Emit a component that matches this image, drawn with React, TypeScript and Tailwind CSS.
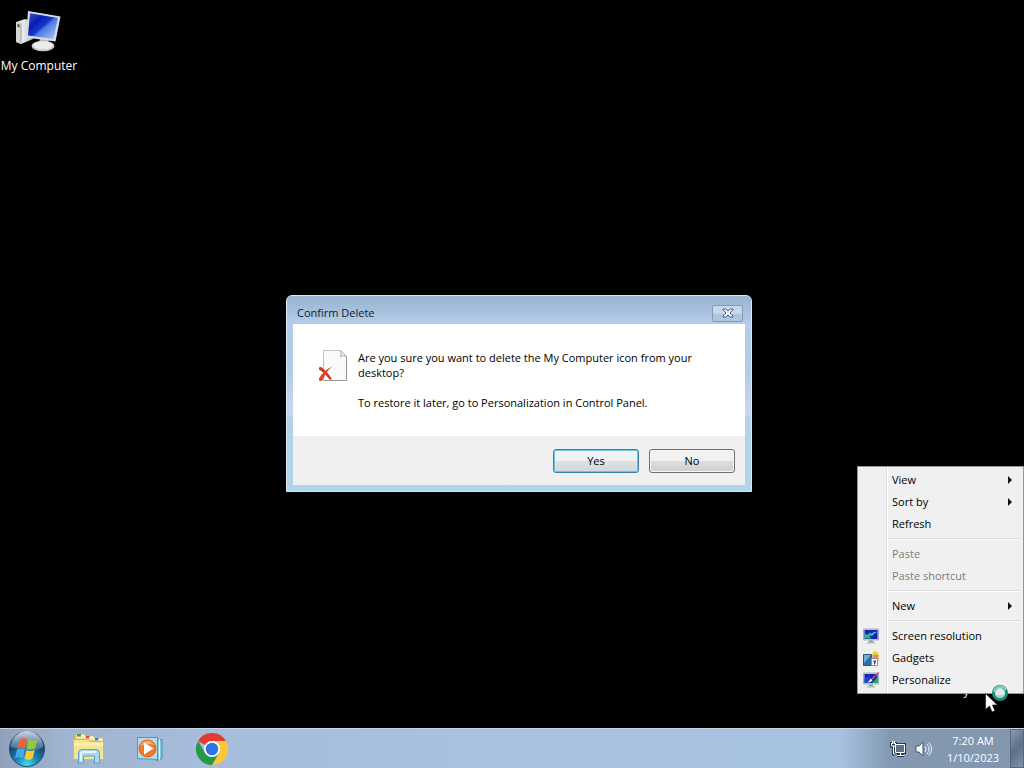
import React from "react";

function ComputerIcon() {
  return (
    <svg width="48" height="44" viewBox="0 0 48 44" aria-hidden="true">
      <defs>
        <linearGradient id="scr" x1="0" y1="0" x2="1" y2="1">
          <stop offset="0" stopColor="#3a55c8" />
          <stop offset=".3" stopColor="#0a1cae" />
          <stop offset=".5" stopColor="#1838cc" />
          <stop offset=".56" stopColor="#4a78e4" />
          <stop offset="1" stopColor="#b4d4fa" />
        </linearGradient>
        <linearGradient id="tower" x1="0" y1="0" x2="1" y2="0">
          <stop offset="0" stopColor="#c4c4c4" />
          <stop offset=".4" stopColor="#ececec" />
          <stop offset="1" stopColor="#b9b9b9" />
        </linearGradient>
      </defs>
      <path d="M1 14l9-3 8 2v18l-12 5-5-2z" fill="url(#tower)" />
      <path d="M1 14l5 1.500V36l-5-2z" fill="#d6d6d6" />
      <path d="M2.500 16l2 .6v3l-2-.6z" fill="#444" />
      <path d="M6 15.500V36" stroke="#9a9a9a" strokeWidth=".8" />
      <path d="M23 37l2-6h8l2 7z" fill="#b8b8b8" />
      <ellipse cx="28" cy="38" rx="11.500" ry="5.200" fill="#c9c9c9" />
      <ellipse cx="28" cy="37.300" rx="10" ry="4" fill="#ececec" />
      <path d="M13 3l32.500 5.500-5 25L11 29.500z" fill="#d8dce5" />
      <path d="M15 5.300l28 4.700-4.500 21L13 27.500z" fill="url(#scr)" />
    </svg>
  );
}

function DeletePageIcon() {
  return (
    <svg width="32" height="34" viewBox="0 0 32 34" className="shrink-0" aria-hidden="true">
      <path d="M5.500 1.500h17l6 6v24h-23z" fill="#fafafa" stroke="#c4c4c4" />
      <path d="M22.500 1.500q1.500 3 0 6 3-1.500 6 0z" fill="#fff" stroke="#a5a5a5" />
      <path d="M28.500 8v23.500h-23" fill="none" stroke="#989898" />
      <path d="M1 18.500q2-1 3.500.5 5 4 9.500 11-1.500 1-2.500.5Q7 24 1 20.500z" fill="#c83a22" />
      <path d="M14.500 17.500q-6 4-9.500 13-1.500 2-3 1.500T1 29.500Q6 21 14.500 17.500z" fill="#de4527" />
    </svg>
  );
}

function MonitorIcon({ brush = false }: { brush?: boolean }) {
  return (
    <svg width="16" height="16" viewBox="0 0 16 16" aria-hidden="true">
      <path d="M.5 1h15v11H.500z" fill="#c9d1e0" stroke="#a8afbd" />
      <path d="M1.500 2h13v9h-13z" fill="#1024b0" />
      {brush ? (
        <>
          <path d="M1.500 7l5-4v8h-5z" fill="#2443d8" />
          <path d="M9 11l5.500-6v6z" fill="#1fb54a" />
          <path d="M15.500 0L16 1 8.500 8.500 7 7.500z" fill="#c94b8c" />
          <path d="M7.500 6.500l2 2Q7.500 11 4.500 10.500 6.500 9 7.500 6.500z" fill="#f0f3f5" />
        </>
      ) : (
        <>
          <path d="M2 10.500V5l2 2 3-2.500L9 6 6.500 8.500l2 2z" fill="#29bd75" />
          <path d="M7.500 7q3-4 6.500-3-3 1-5 4z" fill="#5ac8ee" />
        </>
      )}
      <path d="M6 12.500h4V14H6z" fill="#8e98a5" />
      <path d="M4 14h8v1.500H4z" fill="#a9c5b3" />
    </svg>
  );
}

function GadgetsIcon() {
  return (
    <svg width="16" height="17" viewBox="0 0 16 17" aria-hidden="true">
      <path d="M12 0l1 2 2-.5-.5 2L16 5l-2 1H9l1-2-1-2 2 .5z" fill="#f5cd2c" />
      <path d="M9.500 5h6v6h-6z" fill="#f08b49" />
      <path d="M.5 4.500h8v11h-8z" fill="#2f6fa8" stroke="#315573" />
      <path d="M1 5h7L1 13z" fill="#72add6" />
      <path d="M8.500 8.500h6v7h-6z" fill="#fff" stroke="#8991a0" />
      <path d="M10 10.500h3v1l-1 3h-1.500l.8-2.800H10z" fill="#474b88" />
    </svg>
  );
}

function StartOrb() {
  return (
    <svg width="38" height="38" viewBox="0 0 38 38" aria-hidden="true">
      <defs>
        <radialGradient id="orb" cx=".5" cy=".95" r=".9">
          <stop offset="0" stopColor="#3fe0f5" />
          <stop offset=".35" stopColor="#1787b8" />
          <stop offset=".7" stopColor="#174a78" />
          <stop offset="1" stopColor="#3a5878" />
        </radialGradient>
        <linearGradient id="gloss" x1="0" y1="0" x2="0" y2="1">
          <stop offset="0" stopColor="#e2edf5" stopOpacity=".85" />
          <stop offset="1" stopColor="#9fbdd2" stopOpacity=".3" />
        </linearGradient>
      </defs>
      <circle cx="19" cy="19" r="17.500" fill="url(#orb)" stroke="#30485f" />
      <path d="M3 17a16 16 0 0132 0q-7 4-16 3T3 17z" fill="url(#gloss)" />
      <path d="M12 9.500q3.500-2.500 7-.5l-1.800 9q-4-2-8 .2z" fill="#ee6335" />
      <path d="M20.500 9.800q4.500 2 9-.5l-2.300 9q-4.300 2.200-8.500.5z" fill="#94c83d" />
      <path d="M8.800 19.800q4-2.200 8-.4L15 28q-4-1.800-8 .2z" fill="#49a8e8" />
      <path d="M18.300 20.200q4.200 1.700 8.500-.5l-2.300 9q-4 2.200-8 .4z" fill="#fcc934" />
    </svg>
  );
}

function ExplorerIcon() {
  return (
    <svg width="34" height="32" viewBox="0 0 34 32" aria-hidden="true">
      <path d="M2.500 3.500h11l1 1h8l1 2h8v20h-29z" fill="#e8cf73" stroke="#c9a951" />
      <path d="M4 1.500h9v4H4z" fill="#f4e7a1" />
      <path d="M13 3h9v4h-9z" fill="#f4e7a1" />
      <path d="M22 5h9v4h-9z" fill="#f4e7a1" />
      <path d="M5 1h4v2.500H5z" fill="#35a845" />
      <path d="M14 3h3.500v2.500H14z" fill="#d94a35" />
      <path d="M23 5h3.500v2.500H23z" fill="#3b83d8" />
      <path d="M9 2h3v1.500H9zM17.500 4h3v1.500h-3zM26.500 6h3v1.500h-3z" fill="#fff" />
      <path d="M1.500 6.500h14l3 2h13v18h-30z" fill="#f5e494" stroke="#d6b75b" />
      <path d="M2 10h29v3H2z" fill="#fff4b7" opacity=".7" />
      <path d="M6.500 30V20q0-3.500 3.500-3.500h14q3.500 0 3.500 3.500v10h-5v-7h-11v7z" fill="#a4d8ef" stroke="#5aa4cc" />
      <path d="M9 28v-7q0-2 2-2h13" fill="none" stroke="#e5f7ff" strokeWidth="2" />
    </svg>
  );
}

function PlayerIcon() {
  return (
    <svg width="28" height="28" viewBox="0 0 28 28" aria-hidden="true">
      <path d="M8 3.500l18 1v19l-6 2z" fill="#8ec3df" stroke="#4191bb" />
      <path d="M23.500 4v21M21 4v21" stroke="#e6f5fb" strokeWidth="1" />
      <path d="M1.500 2.500h20v22l-20-1z" fill="#b6dcea" stroke="#4b9bbd" />
      <circle cx="11.500" cy="13.500" r="8.500" fill="#ec7b24" stroke="#d9681b" />
      <path d="M4 11q3-6 10-5l5 4q-8-2-15 1z" fill="#f9b06b" />
      <path d="M8 7.500l9.500 6L8 19.500z" fill="#fff" />
    </svg>
  );
}

function ChromeIcon() {
  return (
    <svg width="32" height="32" viewBox="0 0 32 32" aria-hidden="true">
      <path d="M16 16L2.140 8A16 16 0 0129.860 8z" fill="#e33b2e" />
      <path d="M16 8h13.860A16 16 0 0116 32l6.930-12z" fill="#fcc934" />
      <path d="M16 32A16 16 0 012.140 8l6.930 12L16 24l6.930-4z" fill="#279847" />
      <circle cx="16" cy="16" r="8" fill="#fff" />
      <circle cx="16" cy="16" r="6.300" fill="#2f74e0" />
    </svg>
  );
}

function NetworkIcon() {
  return (
    <svg width="17" height="17" viewBox="0 0 17 17" aria-hidden="true">
      <path d="M5.500 4.500h9v8h-9zM7 15.500h7M10.500 12v3M1.500 2v4h4V2M3.500 6v8h2" fill="none" stroke="#26384d" strokeWidth="3" />
      <path d="M5.500 4.500h9v8h-9z" fill="#5e7186" stroke="#fff" />
      <path d="M7 15.500h7M10.500 12v3M1.500 3v3h4V3M2.500 1v3M4.500 1v3M3.500 6v8h2" fill="none" stroke="#fff" />
    </svg>
  );
}

function VolumeIcon() {
  return (
    <svg width="17" height="16" viewBox="0 0 17 16" aria-hidden="true">
      <path d="M1 5h3l4-4v14l-4-4H1z" fill="#f7f9fb" stroke="#45586e" />
      <path d="M10 5q2 3 0 6M12 3q4 5 0 10M14 1.500q5 6.500 0 13" fill="none" stroke="#edf2f8" />
    </svg>
  );
}

function BusyPointer() {
  return (
    <svg width="26" height="30" viewBox="0 0 26 30" aria-hidden="true">
      <circle cx="16" cy="8" r="6.500" fill="#dbece8" stroke="#208c78" strokeWidth="3" />
      <path d="M11 9q5 3 10 0-1 4-5 4t-5-4z" fill="#a9cfc6" />
      <path d="M10 7a6.500 6.500 0 0112-2" fill="none" stroke="#8ccfc0" strokeWidth="2" />
      <path d="M1.500 8.500v16l4-3.500 2.500 6 3-1.200-2.500-5.800h5z" fill="#fff" stroke="#111" strokeWidth=".7" />
    </svg>
  );
}

type Item = { label: string; disabled?: boolean; submenu?: boolean; icon?: React.ReactNode };

const groups: Item[][] = [
  [{ label: "View", submenu: true }, { label: "Sort by", submenu: true }, { label: "Refresh" }],
  [{ label: "Paste", disabled: true }, { label: "Paste shortcut", disabled: true }],
  [{ label: "New", submenu: true }],
  [
    { label: "Screen resolution", icon: <MonitorIcon /> },
    { label: "Gadgets", icon: <GadgetsIcon /> },
    { label: "Personalize", icon: <MonitorIcon brush /> },
  ],
];

function ContextMenu() {
  return (
    <div
      role="menu"
      className="absolute right-0 bottom-[34px] w-[167px] border border-[#979797] bg-[#f0f0f0] bg-[linear-gradient(90deg,transparent_28px,#dedede_28px,#dedede_29px,#fff_29px,#fff_30px,transparent_30px)] p-0.5"
    >
      {groups.map((group, i) => (
        <div key={i}>
          {i > 0 && <div role="separator" className="my-[3px] ml-7 h-0.5 border-t border-[#dadada] bg-white" />}
          {group.map((item) => (
            <button
              key={item.label}
              role="menuitem"
              disabled={item.disabled}
              className="flex h-[22px] w-full items-center text-left disabled:text-[#7c7c7c]"
            >
              <span className="flex w-8 shrink-0 items-center pl-[3px]">{item.icon}</span>
              <span className="flex-1">{item.label}</span>
              {item.submenu && (
                <svg width="4" height="8" viewBox="0 0 4 8" className="mr-[9px]" aria-hidden="true">
                  <path d="M0 0l4 4-4 4z" fill="#111" />
                </svg>
              )}
            </button>
          ))}
        </div>
      ))}
    </div>
  );
}

function ConfirmDialog() {
  return (
    <section
      role="dialog"
      aria-labelledby="dialog-title"
      className="absolute top-[295px] left-[286px] flex w-[466px] flex-col rounded-t-md border border-[#d8e8f5] bg-[linear-gradient(180deg,#97b3d0_0px,#b5cde9_28px,#b0cbe8_70px,#cbd8f2_119px,#b2d3ea_120px,#b0d4ea_100%)] px-1.5 pb-1.5"
    >
      <header className="flex h-7 items-center justify-between pt-1.5 pl-1">
        <h1 id="dialog-title" className="text-[#0b1a30]">Confirm Delete</h1>
        <button
          aria-label="Close"
          className="mr-0.5 flex h-[17px] w-[31px] items-center justify-center rounded-xs border border-[#8799b5] bg-[linear-gradient(180deg,#c4d7ec_50%,#afc6e0_50%)]"
        >
          <svg width="12" height="10" viewBox="0 0 12 10" aria-hidden="true">
            <path d="M1 1h3l2 2 2-2h3v1L8 5l3 3v1H8L6 7 4 9H1V8l3-3-3-3z" fill="#e4ecf6" stroke="#56657d" />
          </svg>
        </button>
      </header>
      <div className="flex h-28 gap-2 bg-white pt-[25px] pr-6 pl-[25px]">
        <DeletePageIcon />
        <div className="flex flex-col gap-[15px] pt-px leading-[15px]">
          <p>Are you sure you want to delete the My Computer icon from your<br />desktop?</p>
          <p>To restore it later, go to Personalization in Control Panel.</p>
        </div>
      </div>
      <footer className="flex h-[49px] items-center justify-end gap-2.5 bg-[#f0f0f0] pr-2.5">
        <button className="h-6 w-[86px] rounded-[3px] border border-[#3c7fb1] bg-[linear-gradient(180deg,#f0f3f4_50%,#dde1e2_50%,#d2d8da)] shadow-[inset_0_0_0_1px_#6fc4de]">Yes</button>
        <button className="h-6 w-[86px] rounded-[3px] border border-[#707070] bg-[linear-gradient(180deg,#f2f2f2_50%,#dedede_50%,#cfcfcf)] shadow-[inset_0_0_0_1px_#f7f7f7]">No</button>
      </footer>
    </section>
  );
}

export default function App() {
  return (
    <div className="flex h-screen flex-col overflow-hidden bg-black font-['Open_Sans','Noto_Sans',sans-serif] text-[11px] leading-4 text-black">
      <main className="relative flex-1">
        <button className="absolute top-2 left-0 flex w-[78px] flex-col items-center gap-1.5 text-white">
          <ComputerIcon />
          <span className="text-[12px] whitespace-nowrap">My Computer</span>
        </button>
        <ConfirmDialog />
        <span className="absolute right-[55px] bottom-[29px] text-white">y</span>
        <ContextMenu />
        <div className="absolute right-[14px] bottom-[13px]">
          <BusyPointer />
        </div>
      </main>
      <footer className="flex h-10 items-center border-t border-[#c6d3e2] bg-[linear-gradient(90deg,#8fa1ba_0%,#a0b3cf_6%,#a6bddb_20%,#a8c2df_50%,#a8c3e2_82%,#8398b2_87%,#8496ae_100%)]">
        <nav className="flex flex-1 items-center" aria-label="Taskbar">
          <button aria-label="Start" className="ml-2"><StartOrb /></button>
          <button aria-label="Windows Explorer" className="ml-[26px]"><ExplorerIcon /></button>
          <button aria-label="Media Player" className="ml-[30px]"><PlayerIcon /></button>
          <button aria-label="Google Chrome" className="ml-8"><ChromeIcon /></button>
        </nav>
        <div className="flex items-center gap-2 self-stretch text-white">
          <button aria-label="Network"><NetworkIcon /></button>
          <button aria-label="Volume"><VolumeIcon /></button>
          <div className="mr-0.5 ml-1.5 w-[54px] text-center leading-[17px] whitespace-nowrap">
            <p>7:20 AM</p>
            <p>1/10/2023</p>
          </div>
          <button aria-label="Show desktop" className="w-3.5 self-stretch border border-[#55677e] bg-[linear-gradient(135deg,#8c9caf,#5d6f86_50%,#8393a8)]" />
        </div>
      </footer>
    </div>
  );
}
